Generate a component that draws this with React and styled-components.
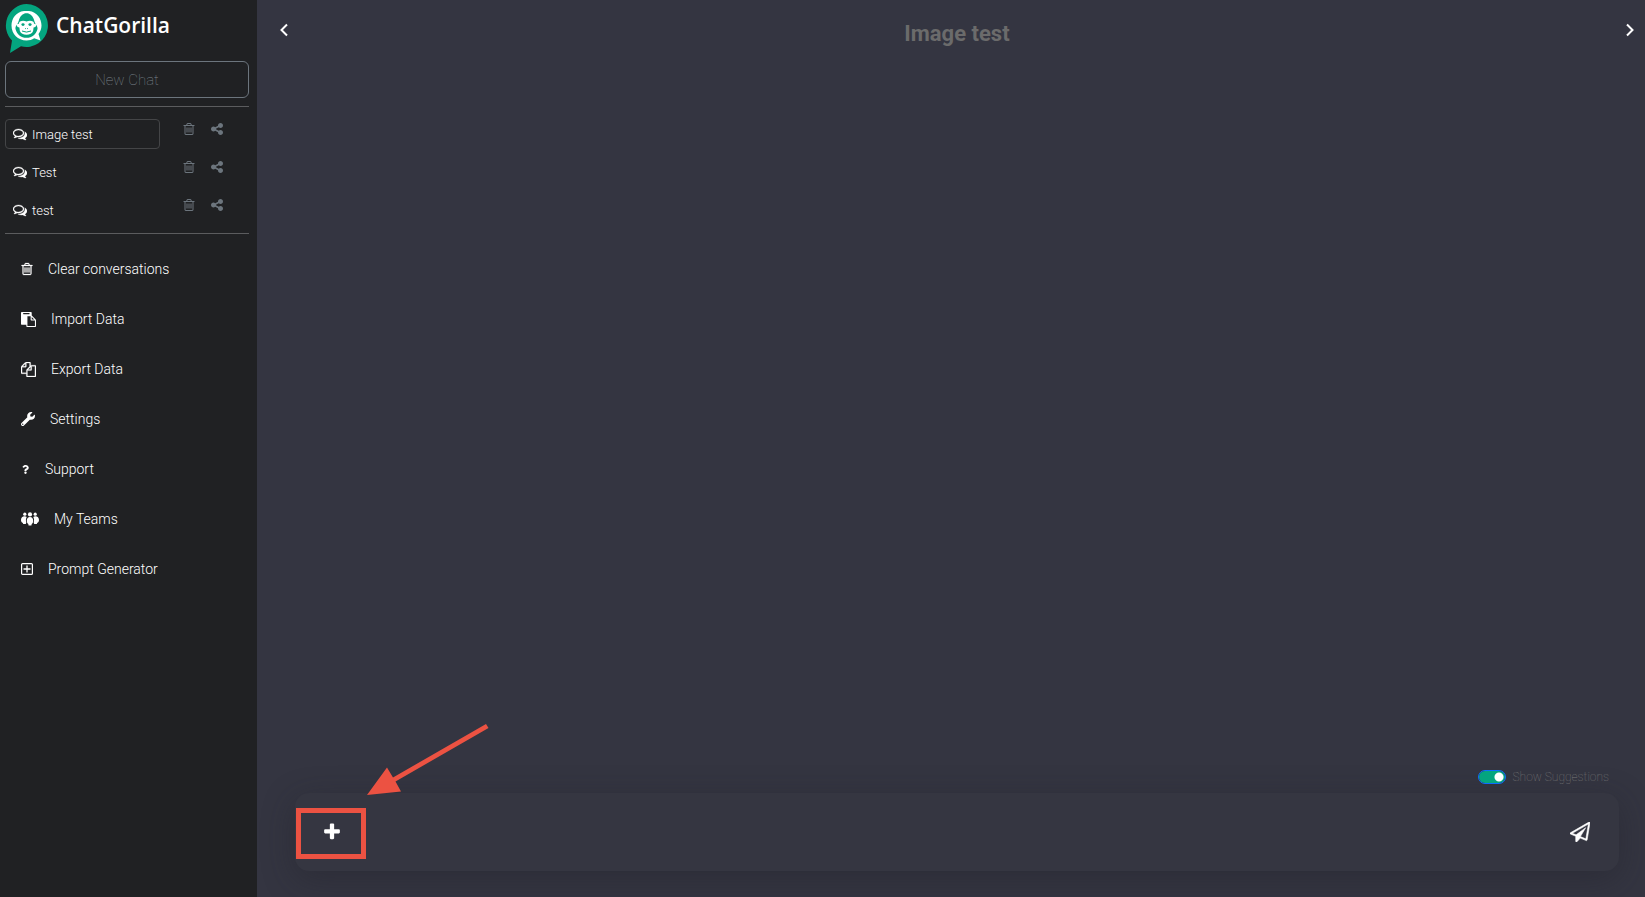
import React from 'react';
import styled, { createGlobalStyle } from 'styled-components';
import { FaWrench, FaQuestion } from 'react-icons/fa';

const GlobalStyle = createGlobalStyle`
  *, *::before, *::after { box-sizing: border-box; }
  body {
    margin: 0;
    background: #343541;
    color: #fff;
    font-family: Roboto, "Liberation Sans", sans-serif;
    font-weight: 300;
  }
  button, input, textarea { font: inherit; color: inherit; }
`;

const PATHS = {
  plus: 'M1600 736v192q0 40-28 68t-68 28h-416v416q0 40-28 68t-68 28h-192q-40 0-68-28t-28-68v-416h-416q-40 0-68-28t-28-68v-192q0-40 28-68t68-28h416v-416q0-40 28-68t68-28h192q40 0 68 28t28 68v416h416q40 0 68 28t28 68z',
  share: 'M1344 1024q133 0 226.5 93.5t93.5 226.5-93.5 226.5-226.5 93.5-226.5-93.5-93.5-226.5q0-12 2-34l-360-180q-92 86-218 86-133 0-226.5-93.5t-93.5-226.5 93.5-226.5 226.5-93.5q126 0 218 86l360-180q-2-22-2-34 0-133 93.5-226.5t226.5-93.5 226.5 93.5 93.5 226.5-93.5 226.5-226.5 93.5q-126 0-218-86l-360 180q2 22 2 34t-2 34l360 180q92-86 218-86z',
  copy: 'M1696 384q40 0 68 28t28 68v1216q0 40-28 68t-68 28h-960q-40 0-68-28t-28-68v-288h-544q-40 0-68-28t-28-68v-672q0-40 20-88t48-76l408-408q28-28 76-48t88-20h416q40 0 68 28t28 68v328q68-40 128-40h416zm-544 213l-299 299h299v-299zm-640-384l-299 299h299v-299zm196 647l316-316v-416h-384v416q0 40-28 68t-68 28h-416v640h512v-256q0-40 20-88t48-76zm956 804v-1152h-384v416q0 40-28 68t-68 28h-416v640h896z',
  paste: 'M768 1664h896v-640h-416q-40 0-68-28t-28-68v-416h-384v1152zm256-1440v-64q0-13-9.5-22.5t-22.5-9.5h-704q-13 0-22.5 9.5t-9.5 22.5v64q0 13 9.5 22.5t22.5 9.5h704q13 0 22.5-9.5t9.5-22.5zm256 672h299l-299-299v299zm512 128v672q0 40-28 68t-68 28h-960q-40 0-68-28t-28-68v-160h-544q-40 0-68-28t-28-68v-1344q0-40 28-68t68-28h1088q40 0 68 28t28 68v328q21 13 36 28l408 408q28 28 48 76t20 88z',
  trash: 'M704 736v576q0 14-9 23t-23 9h-64q-14 0-23-9t-9-23v-576q0-14 9-23t23-9h64q14 0 23 9t9 23zm256 0v576q0 14-9 23t-23 9h-64q-14 0-23-9t-9-23v-576q0-14 9-23t23-9h64q14 0 23 9t9 23zm256 0v576q0 14-9 23t-23 9h-64q-14 0-23-9t-9-23v-576q0-14 9-23t23-9h64q14 0 23 9t9 23zm128 724v-948h-896v948q0 22 7 40.5t14.5 27 10.5 8.5h832q3 0 10.5-8.5t14.5-27 7-40.5zm-672-1076h448l-48-117q-7-9-17-11h-317q-10 2-17 11zm928 32v64q0 14-9 23t-23 9h-96v948q0 83-47 143.5t-113 60.5h-832q-66 0-113-58.5t-47-141.5v-952h-96q-14 0-23-9t-9-23v-64q0-14 9-23t23-9h309l70-167q15-37 54-63t79-26h320q40 0 79 26t54 63l70 167h309q14 0 23 9t9 23z',
  comments: 'M704 384q-153 0-286 52t-211.5 141-78.5 191q0 82 53 158t149 132l97 56-35 84q34-20 62-39l44-31 53 10q78 14 153 14 153 0 286-52t211.5-141 78.5-191-78.5-191-211.5-141-286-52zm0-128q191 0 353.5 68.5t256.5 186.5 94 257-94 257-256.5 186.5-353.5 68.5q-86 0-176-16-124 88-278 128-36 9-86 16h-3q-11 0-20.5-8t-11.5-21q-1-3-1-6.5t.5-6.5 2-6l2.5-5 3.5-5.5 4-5 4.5-5 4-4.5q5-6 23-25t26-29.5 22.5-29 25-38.5 20.5-44q-124-72-195-177t-71-224q0-139 94-257t256.5-186.5 353.5-68.5zm822 1169q10 24 20.5 44t25 38.5 22.5 29 26 29.5 23 25q1 1 4 4.5t4.5 5 4 5 3.5 5.5l2.5 5 2 6 .5 6.5-1 6.5q-3 14-13 22t-22 7q-50-7-86-16-154-40-278-128-90 16-176 16-271 0-472-132 58 4 88 4 161 0 309-45t264-129q125-92 192-212t67-254q0-77-23-152 129 71 204 178t75 230q0 120-71 224.5t-195 176.5z',
  plane: 'M1764 11q33 24 27 64l-256 1536q-5 29-32 45-14 8-31 8-11 0-24-5l-527-215-298 327q-18 21-47 21-14 0-23-4-19-7-30-23.5t-11-36.5v-452l-472-193q-37-14-40-55-3-39 32-59l1664-960q35-21 68 2zm-342 1499l221-1323-1434 827 336 137 863-639-478 797z',
};

const Glyph = ({ name, size = 14, crop = 0, bold = 0 }) => (
  <svg
    width={size - crop}
    height={size}
    viewBox={`${(crop / size) * 896} 0 ${1792 - (crop / size) * 1792} 1792`}
    fill="currentColor"
    stroke={bold ? 'currentColor' : 'none'}
    strokeWidth={bold}
    aria-hidden="true"
  >
    <path d={PATHS[name]} />
  </svg>
);

const TeamIcon = () => (
  <svg width="18" height="14" viewBox="0 0 18 14" fill="currentColor" aria-hidden="true">
    <circle cx="3.8" cy="2.2" r="1.6" />
    <circle cx="14.2" cy="2.2" r="1.6" />
    <circle cx="9" cy="2.4" r="2.1" />
    <path d="M3.6 4.2C1.400 4.200 0 5.800 0 8c0 1.600.8 2.500 1.800 2.900l.4 1.200h2.600l.5-1.500C4.700 8.600 4.800 6.600 5.700 5.100 5.100 4.500 4.400 4.200 3.600 4.200z" />
    <path d="M14.400 4.200c2.200 0 3.600 1.600 3.600 3.800 0 1.600-.8 2.500-1.800 2.900l-.4 1.200h-2.600l-.5-1.500c.6-2 .5-4-.4-5.500.6-.6 1.300-.9 2.100-.9z" />
    <path d="M9 4.900c-2 0-3.200 1.500-3.200 3.700 0 1.900.6 2.900 1.500 3.400l.3 1.500h2.800l.3-1.500c.9-.5 1.500-1.500 1.500-3.400C12.200 6.400 11 4.900 9 4.900z" />
  </svg>
);

const PlusBoxIcon = () => (
  <svg width="12" height="14" viewBox="0 0 12 14" fill="none" stroke="currentColor" aria-hidden="true">
    <rect x="0.6" y="1.600" width="10.800" height="10.800" rx="1" strokeWidth="1.200" />
    <path d="M6 3.500v7M2.500 7h7" strokeWidth="1.300" />
  </svg>
);

const Chevron = ({ right }) => (
  <svg width="8" height="14" viewBox="0 0 8 14" fill="none" stroke="currentColor" strokeWidth="2" aria-hidden="true">
    <path d={right ? 'M1 1.500L6.500 7L1 12.500' : 'M7 1.500L1.500 7L7 12.500'} />
  </svg>
);

const LogoMark = () => (
  <svg width="43" height="50" viewBox="0 0 43 50" aria-hidden="true">
    <path d="M21.500 0A21.500 21.500 0 1 1 16 42.300L5 49 7 36.500A21.500 21.500 0 0 1 21.500 0z" fill="#04a57f" />
    <path d="M19 7C11 8 6.500 14.500 6.500 21.500c0 8.500 6.500 15 15 15 3 0 5.500-.8 7.700-2.200L35.500 36.500 33.500 30c1.900-2.400 3-5.300 3-8.500C36.500 14.500 32 8 24 7z" fill="#fff" />
    <path d="M19.500 9.500c-3.500 1.200-5 4-6 8-.7 3-3.500 4.500-3 7.500C12 30.500 16 33.800 21.500 33.800S31 30.500 32.500 25c.5-3-2.300-4.500-3-7.500-1-4-2.500-6.800-6-8-1-.5-3-.5-4 0z" fill="#04a57f" />
    <path d="M15 17.500c2-1.200 4.500-1 6.500 0 2-1 4.500-1.200 6.500 0 .8.500 1 1.500 1 2.500 1.500-.5 2.500.5 2 2-.4 1-1.200 1.400-2.200 1.300-.6 1.500-.3 2.400-.8 4-.8 2.200-3.200 3.500-6.500 3.500S15.800 29.500 15 27.300c-.5-1.600-.2-2.500-.8-4-1 .1-1.800-.3-2.200-1.300-.5-1.500.5-2.500 2-2 0-1 .2-2 1-2.500z" fill="#fff" />
    <ellipse cx="18" cy="20.600" rx="1.600" ry="1.400" fill="#04a57f" />
    <ellipse cx="25" cy="20.600" rx="1.600" ry="1.400" fill="#04a57f" />
    <path d="M20 24.200l.8.600M23 24.200l-.8.600M17 27q4.500 2.200 9 0" stroke="#04a57f" strokeWidth="1" fill="none" />
  </svg>
);

const Page = styled.div`
  display: flex;
  min-height: 100vh;
`;

const Sidebar = styled.aside`
  flex: 0 0 257px;
  padding: 4px 8px 0 5px;
  background: #202123;
`;

const Brand = styled.a`
  display: flex;
  gap: 8px;
  height: 57px;
  color: #fff;
  text-decoration: none;
`;

const BrandName = styled.span`
  font: 600 21px/43px "Open Sans", "Noto Sans", sans-serif;
`;

const NewChat = styled.button`
  display: block;
  width: 100%;
  height: 37px;
  padding: 0;
  border: 1px solid #6c757d;
  border-radius: 6px;
  background: none;
  color: #7b848c;
  font-size: 15px;
  font-weight: 100;
`;

const ChatList = styled.ul`
  list-style: none;
  margin: 8px 0 0;
  padding: 12px 0 8px;
  border: solid #5b5c5e;
  border-width: 1px 0;
  display: grid;
  gap: 8px;
`;

const ChatRow = styled.li`
  display: flex;
  height: 30px;
`;

const ChatButton = styled.button`
  display: flex;
  align-items: center;
  gap: 5px;
  width: 155px;
  margin-right: 22px;
  padding: 0 7px;
  border: 1px solid ${(p) => (p.$active ? '#444547' : 'transparent')};
  border-radius: 4px;
  background: none;
  font-size: 13px;
`;

const RowAction = styled.button`
  display: flex;
  height: 20px;
  margin-right: 14px;
  padding: 3px 0;
  border: 0;
  background: none;
  color: #6c757d;
`;

const Menu = styled.nav`
  display: flex;
  flex-direction: column;
  padding: 10px 0 0 16px;
`;

const MenuLink = styled.a`
  display: flex;
  align-items: center;
  gap: 15px;
  height: 50px;
  color: #fff;
  font-size: 14px;
  text-decoration: none;
`;

const Main = styled.main`
  position: relative;
  flex: 1;
  min-width: 0;
  display: flex;
  flex-direction: column;
  justify-content: space-between;
`;

const Header = styled.header`
  display: flex;
  justify-content: space-between;
  align-items: flex-start;
  padding: 20px 11px 0 23px;
`;

const Title = styled.h1`
  margin: 0;
  color: #6b6b6b;
  font-size: 22px;
  line-height: 28px;
  font-weight: 700;
`;

const PlainButton = styled.button`
  display: flex;
  padding: 3px 0;
  border: 0;
  background: none;
`;

const Footer = styled.footer`
  padding: 0 26px 26px 38px;
`;

const SwitchLabel = styled.label`
  display: flex;
  justify-content: flex-end;
  align-items: center;
  gap: 7px;
  margin: 0 10px 8px 0;
  color: #7a7a7a;
  font-size: 12px;
  font-weight: 100;
  line-height: 16px;
`;

const Switch = styled.input`
  appearance: none;
  width: 28px;
  height: 14px;
  margin: 0;
  border: 1px solid #0d6efd;
  border-radius: 7px;
  background: radial-gradient(circle at 20px 6px, #fff 4px, #04a57f 5px) padding-box;
`;

const Composer = styled.form`
  display: flex;
  align-items: center;
  height: 78px;
  padding: 0 29px 0 27px;
  border-radius: 14px;
  background: #353641;
  box-shadow: 0 8px 32px rgba(32, 33, 40, 0.4);
`;

const Prompt = styled.textarea`
  flex: 1;
  height: 40px;
  margin: 0 20px;
  border: 0;
  outline: 0;
  resize: none;
  background: none;
`;

const Highlight = styled.div`
  position: absolute;
  left: 39px;
  bottom: 38px;
  width: 70px;
  height: 51px;
  border: 5px solid #ec5242;
`;

const Arrow = styled.svg`
  position: absolute;
  left: 110px;
  bottom: 101px;
`;

const chats = ['Image test', 'Test', 'test'];

const menu = [
  ['Clear conversations', <Glyph name="trash" crop={2} bold={30} />],
  ['Import Data', <Glyph name="paste" size={15} />],
  ['Export Data', <Glyph name="copy" size={15} bold={30} />],
  ['Settings', <FaWrench size={14} />],
  ['Support', <FaQuestion size={9} />],
  ['My Teams', <TeamIcon />],
  ['Prompt Generator', <PlusBoxIcon />],
];

export default function App() {
  return (
    <Page>
      <GlobalStyle />
      <Sidebar>
        <Brand href="#">
          <LogoMark />
          <BrandName>ChatGorilla</BrandName>
        </Brand>
        <NewChat type="button">New Chat</NewChat>
        <ChatList>
          {chats.map((name, i) => (
            <ChatRow key={name}>
              <ChatButton type="button" $active={i === 0}>
                <Glyph name="comments" bold={40} />
                {name}
              </ChatButton>
              <RowAction type="button" aria-label="Delete chat"><Glyph name="trash" /></RowAction>
              <RowAction type="button" aria-label="Share chat"><Glyph name="share" /></RowAction>
            </ChatRow>
          ))}
        </ChatList>
        <Menu>
          {menu.map(([label, icon]) => (
            <MenuLink href="#" key={label}>{icon}{label}</MenuLink>
          ))}
        </Menu>
      </Sidebar>
      <Main>
        <Header>
          <PlainButton type="button" aria-label="Collapse sidebar"><Chevron /></PlainButton>
          <Title>Image test</Title>
          <PlainButton type="button" aria-label="Open panel"><Chevron right /></PlainButton>
        </Header>
        <Footer>
          <SwitchLabel>
            <Switch type="checkbox" role="switch" defaultChecked />
            Show Suggestions
          </SwitchLabel>
          <Composer>
            <PlainButton type="button" aria-label="Add attachment"><Glyph name="plus" size={20} /></PlainButton>
            <Prompt aria-label="Message" />
            <PlainButton type="submit" aria-label="Send"><Glyph name="plane" size={20} bold={50} /></PlainButton>
          </Composer>
        </Footer>
        <Highlight />
        <Arrow width="124" height="74" viewBox="0 0 124 74" fill="#ec5242" aria-hidden="true">
          <path d="M0 73L20 45.500L26 55.500L119 2L121.500 6L28.500 59.500L34 69.500z" />
        </Arrow>
      </Main>
    </Page>
  );
}
